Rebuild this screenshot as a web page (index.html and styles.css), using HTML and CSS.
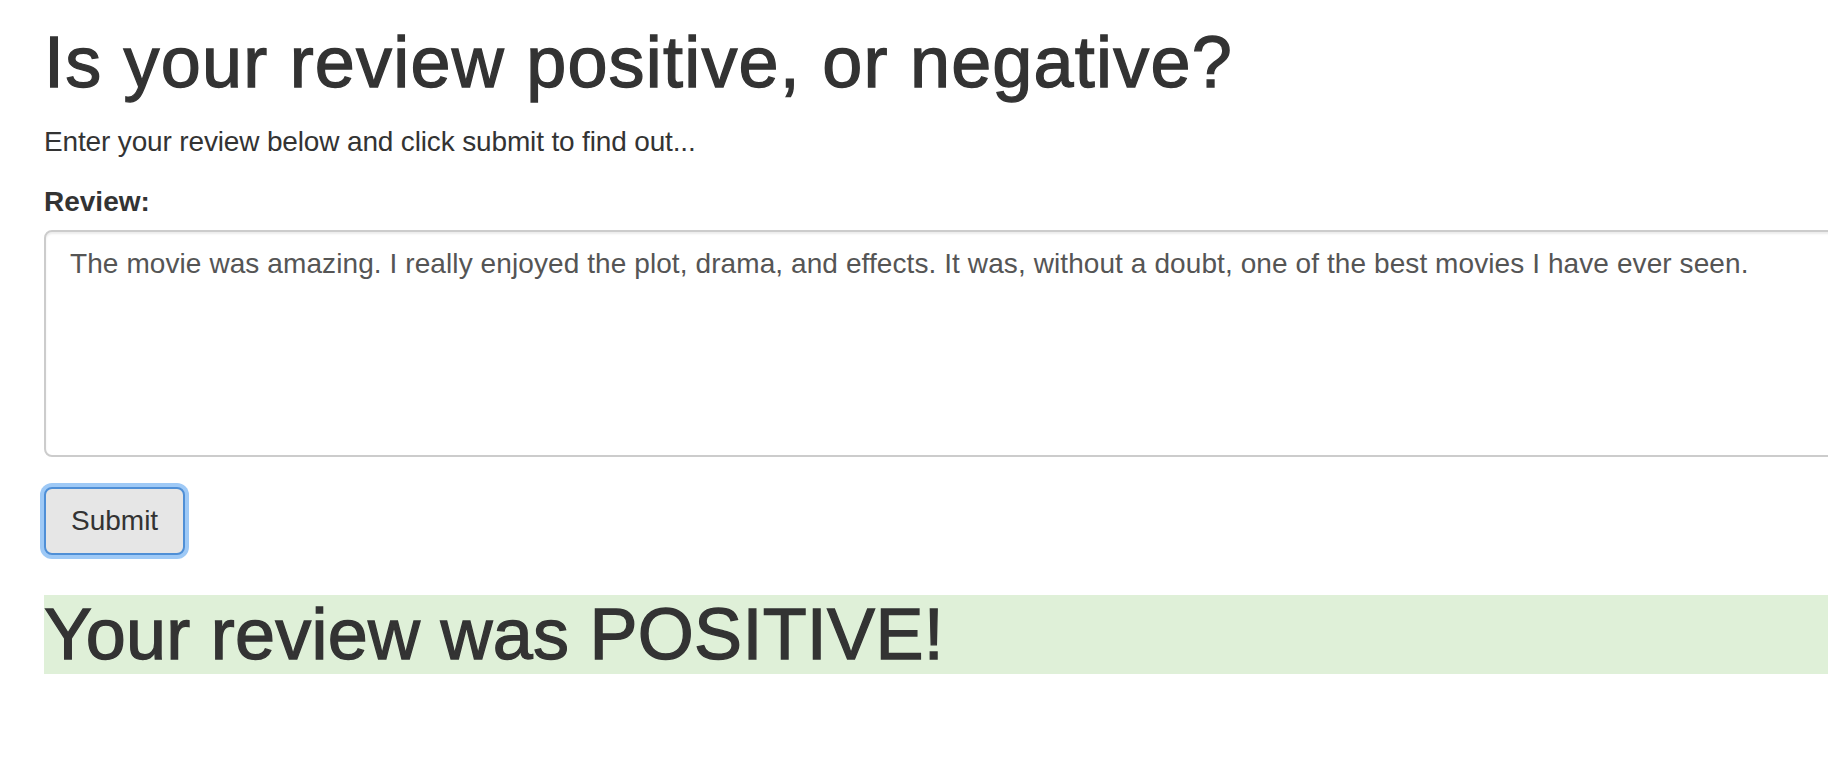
FILE: index.html
```html
<!DOCTYPE html>
<html lang="en">
<head>
<meta charset="utf-8">
<title>Sentiment</title>
<link rel="stylesheet" href="styles.css">
</head>
<body>
<div class="page">
  <h1 class="title">Is your review positive, or negative?</h1>
  <p class="lead">Enter your review below and click submit to find out...</p>
  <form class="form">
    <div class="form-group">
      <label class="label" for="review">Review:</label>
      <textarea class="review" id="review">The movie was amazing. I really enjoyed the plot, drama, and effects. It was, without a doubt, one of the best movies I have ever seen.</textarea>
    </div>
    <button type="button" class="btn">Submit</button>
  </form>
  <h1 class="result">Your review was POSITIVE!</h1>
</div>
</body>
</html>
```
FILE: styles.css
```css
html {
  overflow: hidden;
}
body {
  margin: 0;
  background: #fff;
  color: #333;
  font-family: "Liberation Sans", Arial, sans-serif;
  font-size: 28px;
  line-height: 40px;
}
.page {
  width: 1900px;
  padding: 0 0 0 44px;
}
.title {
  margin: 23px 0 20px;
  font-size: 72px;
  line-height: 79px;
  font-weight: 400;
  letter-spacing: 1.2px;
  -webkit-text-stroke: 1.3px #333;
}
.lead {
  margin: 0 0 20px;
  letter-spacing: -0.15px;
}
.form {
  margin: 0;
}
.form-group {
  margin-bottom: 30px;
}
.label {
  display: inline-block;
  margin-bottom: 8px;
  font-weight: 700;
}
.review {
  display: block;
  box-sizing: border-box;
  width: 100%;
  height: 227px;
  margin: 0;
  padding: 12px 24px;
  border: 2px solid #ccc;
  border-radius: 8px;
  box-shadow: inset 0 2px 2px rgba(0, 0, 0, 0.075);
  font-family: "Liberation Sans", Arial, sans-serif;
  font-size: 28px;
  line-height: 40px;
  letter-spacing: 0.09px;
  color: #555;
  resize: none;
  outline: none;
}
.btn {
  display: inline-block;
  box-sizing: border-box;
  height: 68px;
  padding: 12px 25px;
  margin: 0;
  border: 2px solid #4f8fd6;
  border-radius: 8px;
  background: #e6e6e6;
  box-shadow: 0 0 0 4px #9ec9f6;
  color: #333;
  font-family: "Liberation Sans", Arial, sans-serif;
  font-size: 28px;
  line-height: 40px;
}
.result {
  margin: 40px 0 20px;
  font-size: 72px;
  line-height: 79px;
  font-weight: 400;
  letter-spacing: 0.25px;
  -webkit-text-stroke: 1.3px #333;
  background: #dff0d8;
}
```
